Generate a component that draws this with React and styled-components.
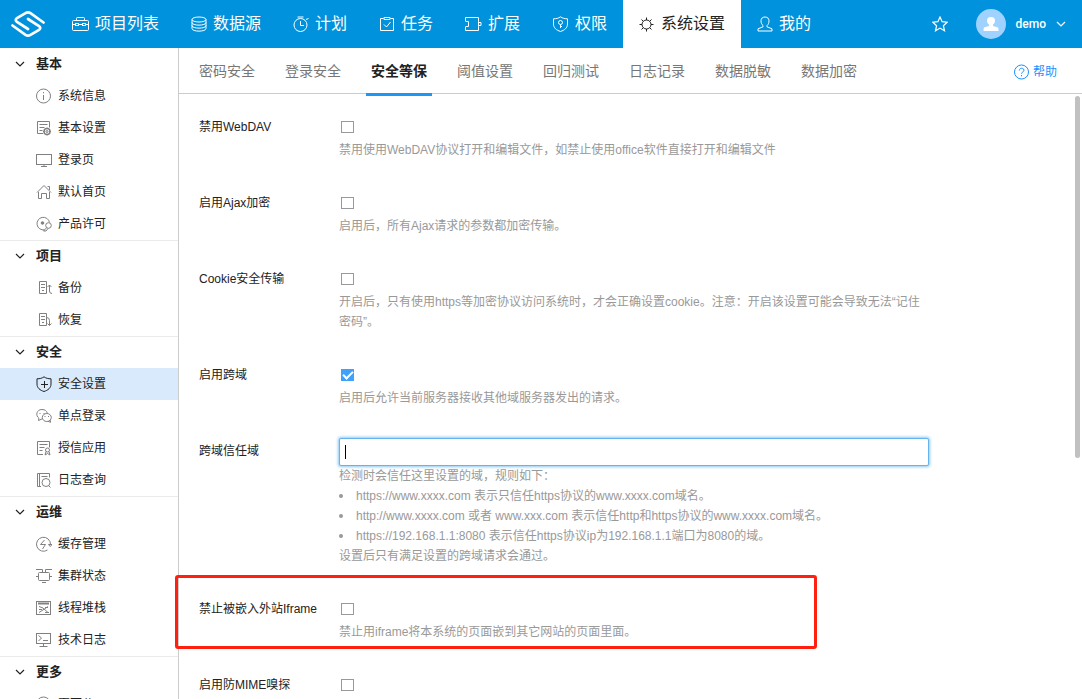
import React from "react";
import styled, { createGlobalStyle, css } from "styled-components";

const GlobalStyle = createGlobalStyle`
  * { box-sizing: border-box; }
  body {
    margin: 0;
    background: #fff;
    color: #222;
    font: 12px/20px "Liberation Sans", "Noto Sans CJK SC", sans-serif;
  }
  a { color: inherit; text-decoration: none; }
  button, input { font: inherit; }
`;

const Page = styled.div`
  display: flex;
  flex-direction: column;
  height: 100vh;
  overflow: hidden;
`;

const Header = styled.header`
  display: flex;
  align-items: center;
  flex: none;
  height: 48px;
  padding: 0 16px 0 10px;
  background: #0092dc;
  color: #fff;
`;

const LogoLink = styled.a`
  display: flex;
  margin-right: 10px;
`;

const MainNav = styled.nav`
  display: flex;
  height: 100%;
`;

const NavItem = styled.a`
  display: flex;
  align-items: center;
  gap: 6px;
  padding: 0 16px;
  font-size: 16px;
  line-height: 24px;
  white-space: nowrap;
  ${(p) => p.$active && css`
    background: #fff;
    color: #222;
  `}
`;

const UserArea = styled.div`
  display: flex;
  align-items: center;
  margin-left: auto;
`;

const IconButton = styled.button`
  display: flex;
  padding: 0;
  margin-right: 28px;
  border: 0;
  background: none;
  color: inherit;
`;

const UserButton = styled.button`
  display: flex;
  align-items: center;
  gap: 10px;
  padding: 0;
  border: 0;
  background: none;
  color: inherit;
  font-family: Roboto, "Liberation Sans", sans-serif;
  font-weight: 500;
`;

const Body = styled.div`
  display: flex;
  flex: 1;
  min-height: 0;
`;

const Sidebar = styled.aside`
  flex: none;
  width: 179px;
  border-right: 1px solid #ccc;
`;

const Group = styled.section`
  & + & { box-shadow: inset 0 1px #ebebeb; }
`;

const GroupTitle = styled.h2`
  display: flex;
  align-items: center;
  gap: 11px;
  height: 32px;
  margin: 0;
  padding-left: 15px;
  color: #222;
  font-size: 13px;
  font-weight: 600;
  line-height: 20px;
`;

const SideItem = styled.a`
  display: flex;
  align-items: center;
  gap: 6px;
  height: 32px;
  padding-left: 36px;
  background: ${(p) => (p.$active ? "#d9eafc" : "transparent")};
  svg { color: ${(p) => (p.$active ? "#222" : "#808080")}; }
`;

const Main = styled.main`
  display: flex;
  flex-direction: column;
  flex: 1;
  min-width: 0;
`;

const TabBar = styled.nav`
  display: flex;
  gap: 20px;
  flex: none;
  height: 46px;
  padding: 0 25px 0 15px;
  border-bottom: 1px solid #ccc;
`;

const Tab = styled.a`
  height: 48px;
  padding: 0 5px;
  border-bottom: 3px solid ${(p) => (p.$active ? "#1e96f5" : "transparent")};
  color: ${(p) => (p.$active ? "#222" : "#777")};
  font-size: 14px;
  font-weight: ${(p) => (p.$active ? 600 : 400)};
  line-height: 46px;
  white-space: nowrap;
`;

const HelpLink = styled.a`
  display: flex;
  align-items: center;
  gap: 4px;
  height: 48px;
  margin-left: auto;
  color: #1890ff;
`;

const Content = styled.div`
  display: flex;
  flex: 1;
  min-height: 0;
`;

const Form = styled.form`
  display: flex;
  flex-direction: column;
  gap: 30px;
  flex: 1;
  padding: 20px 20px 0;
`;

const Row = styled.div`
  position: relative;
  display: flex;
  flex: none;
`;

const RowLabel = styled.label`
  flex: none;
  width: 140px;
  line-height: 26px;
`;

const Control = styled.div`
  flex: 1;
  max-width: 590px;
`;

const CheckLine = styled.div`
  display: flex;
  align-items: center;
  height: 26px;
  padding-left: 2px;
`;

const Checkbox = styled.input`
  display: grid;
  place-items: center;
  appearance: none;
  width: 13px;
  height: 12px;
  margin: 0;
  border: 1px solid #999;
  background: #fff;
  &:checked {
    border-color: #40a0fa;
    background: #40a0fa;
  }
  &:checked::after {
    content: "";
    width: 8px;
    height: 4px;
    margin-bottom: 3px;
    border: solid #fff;
    border-width: 0 0 2px 2px;
    transform: rotate(-45deg);
  }
`;

const InputWrap = styled.div`
  position: relative;
`;

const TextInput = styled.input`
  display: block;
  width: 100%;
  height: 28px;
  padding: 0 6px;
  border: 1px solid #66b3ee;
  border-radius: 2px;
  outline: none;
  box-shadow: 0 0 3px 1px #8cc8f4;
  caret-color: transparent;
`;

const Caret = styled.span`
  position: absolute;
  top: 7px;
  left: 6px;
  width: 1px;
  height: 14px;
  background: #000;
`;

const Hint = styled.div`
  color: #999;
`;

const Rules = styled.ul`
  margin: 0;
  padding: 0;
  list-style: none;
`;

const Rule = styled.li`
  display: flex;
  align-items: center;
  gap: 13px;
  &::before {
    content: "";
    width: 4px;
    height: 4px;
    border-radius: 50%;
    background: #999;
  }
`;

const Highlight = styled.div`
  position: absolute;
  top: -21px;
  bottom: -7px;
  left: -24px;
  width: 642px;
  border: 3px solid #ff2010;
  border-radius: 3px;
  pointer-events: none;
`;

const ScrollTrack = styled.div`
  flex: none;
  width: 7px;
  padding: 2px 2px 0 0;
`;

const ScrollThumb = styled.div`
  height: 60%;
  border-radius: 3px;
  background: #c1c1c1;
`;

const icons = {
  briefcase: <><rect x=".5" y="4.5" width="16" height="10" rx="1" /><path d="M4.5 4.5v-2q0-1 1-1h6q1 0 1 1v2M.5 8.5h3m3 0h4m3 0h3" /><rect x="3.5" y="7.5" width="3" height="2" /><rect x="10.5" y="7.5" width="3" height="2" /></>,
  database: <><ellipse cx="8" cy="3.5" rx="7" ry="2.5" /><path d="M1 3.5v9c0 3.5 14 3.5 14 0v-9M1 6.5c0 3.5 14 3.5 14 0M1 9.5c0 3.5 14 3.5 14 0" /></>,
  timer: <><circle cx="7.5" cy="9" r="6.5" /><path d="M4.5 1h6M7.5 5v4.500h3.500M13 3.500l2.500-1" /></>,
  task: <><path d="M4.500 2.500h-3v12h13v-12h-3" /><path d="M5 1.500h6v2H5zM5 8.500l2.500 2.500 4-5" /></>,
  plugin: <path d="M.500 5V1.500h13v4M.500 11v3.500h13v-4M.500 5.500h3v5h-3M13.500 5.500v5M13.500 6.500h2.500v3h-2.500" />,
  keyShield: <><path d="M8.500.8C6.500 2.300 4.200 2.800 1.500 2.800V8c0 4 3 6.200 7 7.500 4-1.300 7-3.500 7-7.500V2.800c-2.700 0-5-.5-7-2z" /><circle cx="8.500" cy="6.500" r="2" /><path d="M8.500 8.500v3.500m0-1.500h1.500" /></>,
  gear: <><circle cx="7.500" cy="8.500" r="4.500" /><path d="M7.500 1.500V4M7.500 13v2.500M.5 8.500H3M12 8.500h2.500M2.500 3.500l1.800 1.800M10.700 11.700l1.800 1.800M12.500 3.500l-1.800 1.800M4.300 11.700l-1.800 1.800" /></>,
  person: <path d="M6 9.500C4.700 8.500 4 7 4 4.800 4 2.500 5.500 1 8 1s4 1.500 4 3.800c0 2.200-.7 3.700-2 4.700v1.300l5 2v2.200H1v-2.200l5-2z" />,
  star: <path strokeWidth="1.200" d="M8 1l2.100 4.700 5.100.5-3.800 3.500 1.100 5L8 12.100l-4.500 2.600 1.100-5L.8 6.200l5.100-.5z" />,
  help: <><circle cx="7.500" cy="8" r="7" /><path d="M5.300 6.500c0-3 4.700-2.800 4.700-.3 0 1.700-2.500 1.800-2.500 3.500M7.500 11v1.300" /></>,
  chevron: <path strokeWidth="1.200" d="M1 3l4 4 4-4" />,
  info: <><circle cx="7.500" cy="8" r="7" /><path d="M7.500 7v5M7.500 4v1.300" /></>,
  docGear: <><path d="M7 13.500H1.500v-12h12v6M3.500 4.500h8M3.500 7.500h5M3.500 10.500h3" /><circle cx="11" cy="11.500" r="3" strokeWidth="1.500" /><circle cx="11" cy="11.500" r="1" /><path d="M11 7.500v1.500m0 5v1.500M7 11.500h1.500m5 0H15" /></>,
  monitor: <><rect x=".5" y="2.500" width="15" height="10" /><path d="M8 12.500v2M5 14.500h6" /></>,
  home: <path d="M1 8.500l7-7 7 7M11.500 2.500h2V6M2.500 8v6.500h3v-5h5v5h3V8" />,
  license: <><path d="M8.500 13.800A6.300 6.300 0 1 1 13.500 6.500" /><circle cx="6.500" cy="7" r="1.300" fill="currentColor" /><circle cx="12.500" cy="9.500" r="2.800" /><path d="M10.500 11.800L7.500 15h2.500l2-2.500" /></>,
  backup: <path d="M10.500 13.500h-7v-12h7v12M5 4.500h4M5 7.500h4M6 10.500h2M13.500 5v6q0 2.500 2.500 2.500M11.500 7l2-2 2 2" />,
  restore: <path d="M10.500 13.500h-7v-12h7v12M5 4.500h4M5 7.500h4M6 10.500h2M10.500 5.500q3 0 3 3v5M11.500 11.500l2 2 2-2" />,
  plusShield: <><path d="M8 .8C6 2.300 3.700 2.800 1 2.800V8c0 4 3 6.200 7 7.500 4-1.300 7-3.500 7-7.500V2.800c-2.700 0-5-.5-7-2z" /><path d="M8.500 5v7M5 8.500h7" /></>,
  wechat: <><path d="M6 11l-3.500 1.500.4-2.300C-.8 7.500.5 1.500 6 1.500c3 0 4.800 1.500 5.200 3.500" /><ellipse cx="10.800" cy="9.500" rx="4.500" ry="4" /><path d="M12 13.300l2.500 1v-2M3.500 5.500h1m3 0h1M8.500 8.500h1m2.500 0h1" /></>,
  docCert: <><path d="M7 14.500H1.500v-13h12v6M3.500 4.500h8M3.500 7.500h5M3.500 10.500h3" /><circle cx="11.500" cy="10" r="2" /><path d="M10 11.500L9 15l2.500-1.500L14 15l-1-3.500" /></>,
  docSearch: <><path d="M5 14.500H1.500v-13h12v4M3.500 1.500v13M5.500 4.500h6" /><circle cx="10" cy="10.500" r="4" /><path d="M12.500 13.500l2 2" /></>,
  cache: <><path d="M11.500 14A7 7 0 1 1 14.500 8.500M12.500 8.500h3.500l-1.700 2z" /><path d="M8.500 4l-4 4.500h5L6.500 13" /></>,
  cluster: <><rect x="2.500" y="4.500" width="11" height="8" rx="1" /><path d="M0 1.500h6.500v3M9.500 4.500v-3H16M0 8.500h2.500M13.500 8.500H16M6 14.500h4" /></>,
  thread: <><rect x=".5" y="1.500" width="14" height="13" /><path d="M2 3.500h11" strokeWidth="2" /><path d="M3 6.500l4 1.500 5 4.500M12 6.500L8.500 9 3 12.500M9 7.500h3M3 9.500h3M9 12.500h4" /></>,
  terminal: <><rect x=".5" y="1.500" width="14" height="10" /><path d="M7.500 11.500v3M3.500 14.500h8M2.500 3.500l3 2.500-3 3M7 8.500h5" /></>,
};

function Icon({ name, width = 16, height = 16 }) {
  return (
    <svg width={width} height={height} viewBox={`0 0 ${width} ${height}`} fill="none" stroke="currentColor" strokeWidth="1" aria-hidden="true">
      {icons[name]}
    </svg>
  );
}

function Logo() {
  return (
    <svg width="36" height="28" viewBox="0 0 36 28" fill="none" stroke="#fff" strokeWidth="2.700" strokeLinecap="round" aria-hidden="true">
      <path d="M33.500 12.500L20.500 3.200Q18 1.500 15.500 3.200L7 8Q4.500 10 7 12L18 19" />
      <path d="M2.500 15.500L15.500 24.800Q18 26.500 20.500 24.800L29 20Q31.500 18 29 16L18 9" />
    </svg>
  );
}

function Avatar() {
  return (
    <svg width="30" height="30" viewBox="0 0 30 30" aria-hidden="true">
      <circle cx="15" cy="15" r="15" fill="#a0d2ff" />
      <path fill="#fff" d="M13 15.500c-1.500-1-2-2.200-2-4C11 9 12.500 8 15 8s4 1 4 3.500c0 1.800-.5 3-2 4v1.500l5 1.500q.5.500.5 3.500h-15q0-3 .5-3.500l5-1.500z" />
    </svg>
  );
}

const navItems = [
  ["briefcase", "项目列表", 17],
  ["database", "数据源"],
  ["timer", "计划"],
  ["task", "任务"],
  ["plugin", "扩展", 17],
  ["keyShield", "权限", 17],
  ["gear", "系统设置"],
  ["person", "我的"],
];

const groups = [
  ["基本", [["info", "系统信息"], ["docGear", "基本设置"], ["monitor", "登录页"], ["home", "默认首页"], ["license", "产品许可"]]],
  ["项目", [["backup", "备份"], ["restore", "恢复"]]],
  ["安全", [["plusShield", "安全设置"], ["wechat", "单点登录"], ["docCert", "授信应用"], ["docSearch", "日志查询"]]],
  ["运维", [["cache", "缓存管理"], ["cluster", "集群状态"], ["thread", "线程堆栈"], ["terminal", "技术日志"]]],
  ["更多", [["info", "页面公"]]],
];

const tabs = ["密码安全", "登录安全", "安全等保", "阈值设置", "回归测试", "日志记录", "数据脱敏", "数据加密"];

function CheckRow({ id, label, checked = false, highlighted = false, children }) {
  return (
    <Row>
      <RowLabel htmlFor={id}>{label}</RowLabel>
      <Control>
        <CheckLine><Checkbox id={id} type="checkbox" defaultChecked={checked} /></CheckLine>
        <Hint>{children}</Hint>
      </Control>
      {highlighted && <Highlight />}
    </Row>
  );
}

export default function App() {
  return (
    <Page>
      <GlobalStyle />
      <Header>
        <LogoLink href="#" aria-label="首页"><Logo /></LogoLink>
        <MainNav>
          {navItems.map(([icon, label, width]) => (
            <NavItem key={label} href="#" $active={label === "系统设置"}>
              <Icon name={icon} width={width} />{label}
            </NavItem>
          ))}
        </MainNav>
        <UserArea>
          <IconButton type="button" aria-label="收藏"><Icon name="star" /></IconButton>
          <UserButton type="button"><Avatar />demo<Icon name="chevron" width={10} height={10} /></UserButton>
        </UserArea>
      </Header>
      <Body>
        <Sidebar>
          {groups.map(([title, items]) => (
            <Group key={title}>
              <GroupTitle><Icon name="chevron" width={10} height={10} />{title}</GroupTitle>
              {items.map(([icon, label]) => (
                <SideItem key={label} href="#" $active={label === "安全设置"}>
                  <Icon name={icon} />{label}
                </SideItem>
              ))}
            </Group>
          ))}
        </Sidebar>
        <Main>
          <TabBar>
            {tabs.map((label) => (
              <Tab key={label} href="#" $active={label === "安全等保"}>{label}</Tab>
            ))}
            <HelpLink href="#"><Icon name="help" width={15} />帮助</HelpLink>
          </TabBar>
          <Content>
            <Form>
              <CheckRow id="webdav" label="禁用WebDAV">禁用使用WebDAV协议打开和编辑文件，如禁止使用office软件直接打开和编辑文件</CheckRow>
              <CheckRow id="ajax" label="启用Ajax加密">启用后，所有Ajax请求的参数都加密传输。</CheckRow>
              <CheckRow id="cookie" label="Cookie安全传输">开启后，只有使用https等加密协议访问系统时，才会正确设置cookie。注意：开启该设置可能会导致无法“记住密码”。</CheckRow>
              <CheckRow id="cors" label="启用跨域" checked>启用后允许当前服务器接收其他域服务器发出的请求。</CheckRow>
              <Row>
                <RowLabel htmlFor="domains">跨域信任域</RowLabel>
                <Control>
                  <InputWrap><TextInput id="domains" type="text" /><Caret /></InputWrap>
                  <Hint>
                    检测时会信任这里设置的域，规则如下：
                    <Rules>
                      <Rule>https://www.xxxx.com 表示只信任https协议的www.xxxx.com域名。</Rule>
                      <Rule>http://www.xxxx.com 或者 www.xxx.com 表示信任http和https协议的www.xxxx.com域名。</Rule>
                      <Rule>https://192.168.1.1:8080 表示信任https协议ip为192.168.1.1端口为8080的域。</Rule>
                    </Rules>
                    设置后只有满足设置的跨域请求会通过。
                  </Hint>
                </Control>
              </Row>
              <CheckRow id="iframe" label="禁止被嵌入外站Iframe" highlighted>禁止用iframe将本系统的页面嵌到其它网站的页面里面。</CheckRow>
              <CheckRow id="mime" label="启用防MIME嗅探" />
            </Form>
            <ScrollTrack><ScrollThumb /></ScrollTrack>
          </Content>
        </Main>
      </Body>
    </Page>
  );
}
